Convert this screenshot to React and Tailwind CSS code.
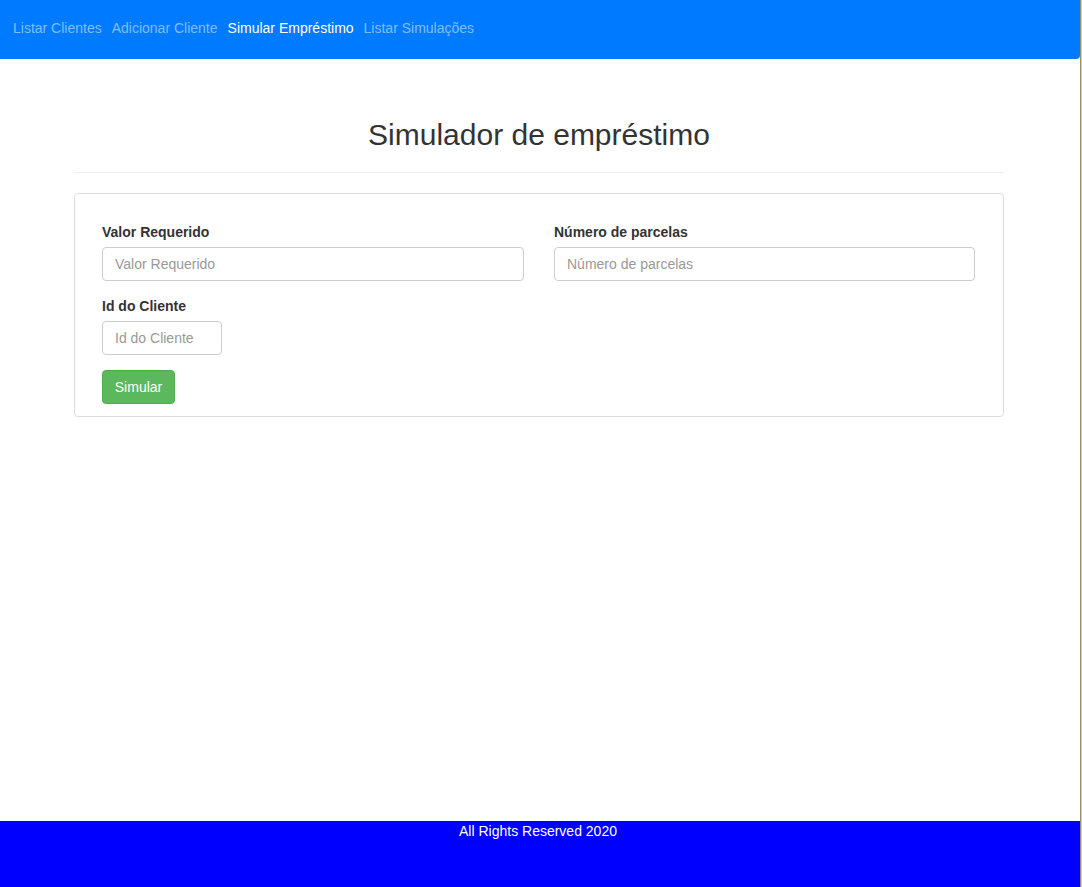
import React from "react";

export default function App() {
  const font = { fontFamily: '"Liberation Sans", Arial, sans-serif' };
  return (
    <div className="flex min-h-screen w-[1082px]" style={font}>
      <div className="flex min-h-screen w-[1080px] flex-col bg-white">
        <nav className="flex h-[59px] items-center gap-[10px] rounded-br-[4px] bg-[#007bff] px-[13px] pb-[2px] text-[14px]">
          <a className="text-[#80bdff]">Listar Clientes</a>
          <a className="text-[#80bdff]">Adicionar Cliente</a>
          <a className="text-white">Simular Empréstimo</a>
          <a className="text-[#80bdff]">Listar Simulações</a>
        </nav>
        <main className="flex-1 px-[74px]">
          <div className="mt-[59px] w-[930px] border-b border-[#eee] pb-[21px]">
            <h2 className="text-center text-[30px] leading-[33px] text-[#333]">
              Simulador de empréstimo
            </h2>
          </div>
          <div className="mt-[20px] w-[930px] rounded-[4px] border border-[#ddd] pl-[27px] pr-[28px] pb-[12px] pt-[28px] text-[14px] text-[#333]">
            <div className="grid grid-cols-[422px_421px] gap-x-[30px]">
              <div className="flex flex-col">
                <label className="mb-[5px] font-bold leading-[20px]">Valor Requerido</label>
                <input
                  placeholder="Valor Requerido"
                  className="h-[34px] rounded-[4px] border border-[#ccc] px-[12px] text-[14px] placeholder:text-[#999]"
                />
              </div>
              <div className="flex flex-col">
                <label className="mb-[5px] font-bold leading-[20px]">Número de parcelas</label>
                <input
                  placeholder="Número de parcelas"
                  className="h-[34px] rounded-[4px] border border-[#ccc] px-[12px] text-[14px] placeholder:text-[#999]"
                />
              </div>
            </div>
            <div className="mt-[15px] flex flex-col">
              <label className="mb-[5px] font-bold leading-[20px]">Id do Cliente</label>
              <input
                placeholder="Id do Cliente"
                className="h-[34px] w-[120px] rounded-[4px] border border-[#ccc] px-[12px] text-[14px] placeholder:text-[#999]"
              />
            </div>
            <button className="mt-[15px] h-[34px] w-[73px] rounded-[4px] border border-[#4cae4c] bg-[#5cb85c] text-[14px] text-white">
              Simular
            </button>
          </div>
        </main>
        <footer className="h-[66px] bg-[#0000ff] pr-[4px] text-center text-[14px] leading-[20px] text-white">
          All Rights Reserved 2020
        </footer>
      </div>
      <div className="w-px bg-[#9b9062]" />
      <div className="w-px bg-[#cfcab0]" />
    </div>
  );
}
